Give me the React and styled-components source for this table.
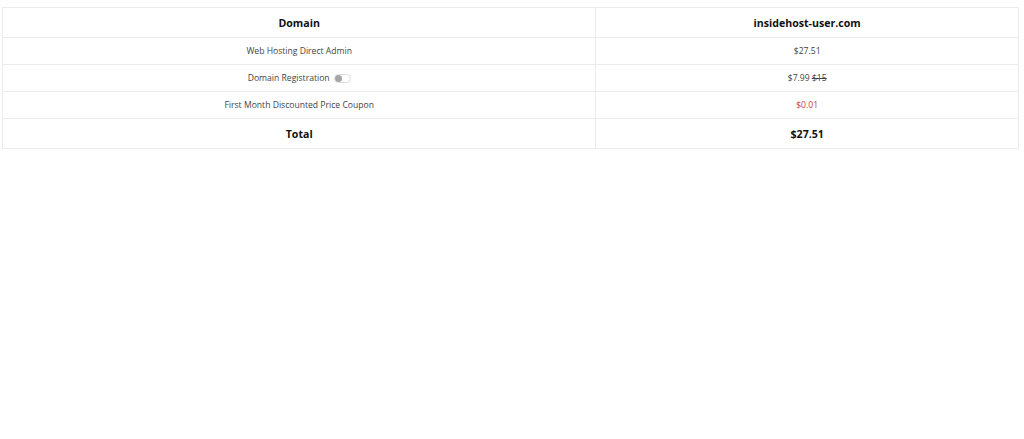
import React from "react";
import styled, { createGlobalStyle } from "styled-components";

const Global = createGlobalStyle`
  html, body { margin: 0; padding: 0; background: #fff; }
  body { font-family: "Open Sans", "Noto Sans", sans-serif; }
`;

const Wrap = styled.div`
  padding: 7px 5px 0 2px;
`;

const Table = styled.table`
  width: 100%;
  border-collapse: collapse;
  border: 1px solid #ececec;
  color: #333;
`;

const Cell = styled.td`
  border: 1px solid #ececec;
  text-align: center;
  font-size: ${(p) => (p.$strong ? "10.6px" : "8.6px")};
  font-weight: ${(p) => (p.$strong ? 700 : 400)};
  color: ${(p) => (p.$strong ? "#111" : "#444")};
  height: ${(p) => (p.$strong ? "29px" : "26px")};
  padding: 0;
  width: ${(p) => p.$w || "auto"};
`;

const Red = styled.span`
  color: #c9413a;
`;

const Strike = styled.s`
  color: #444;
`;

const Toggle = styled.span`
  display: inline-block;
  vertical-align: middle;
  margin-left: 4px;
  width: 15px;
  height: 7px;
  border: 1px solid #ddd;
  border-radius: 5px;
  position: relative;
  background: #fff;
  &::after {
    content: "";
    position: absolute;
    left: 0px;
    top: 0px;
    width: 7px;
    height: 7px;
    border-radius: 50%;
    background: #a5a5a5;
  }
`;

export default function App() {
  return (
    <>
      <Global />
      <Wrap>
        <Table>
          <tbody>
            <tr>
              <Cell $strong $w="58.4%">Domain</Cell>
              <Cell $strong>insidehost-user.com</Cell>
            </tr>
            <tr>
              <Cell>Web Hosting Direct Admin</Cell>
              <Cell>$27.51</Cell>
            </tr>
            <tr>
              <Cell>
                Domain Registration<Toggle />
              </Cell>
              <Cell>
                $7.99 <Strike>$15</Strike>
              </Cell>
            </tr>
            <tr>
              <Cell>First Month Discounted Price Coupon</Cell>
              <Cell>
                <Red>$0.01</Red>
              </Cell>
            </tr>
            <tr>
              <Cell $strong>Total</Cell>
              <Cell $strong>$27.51</Cell>
            </tr>
          </tbody>
        </Table>
      </Wrap>
    </>
  );
}
